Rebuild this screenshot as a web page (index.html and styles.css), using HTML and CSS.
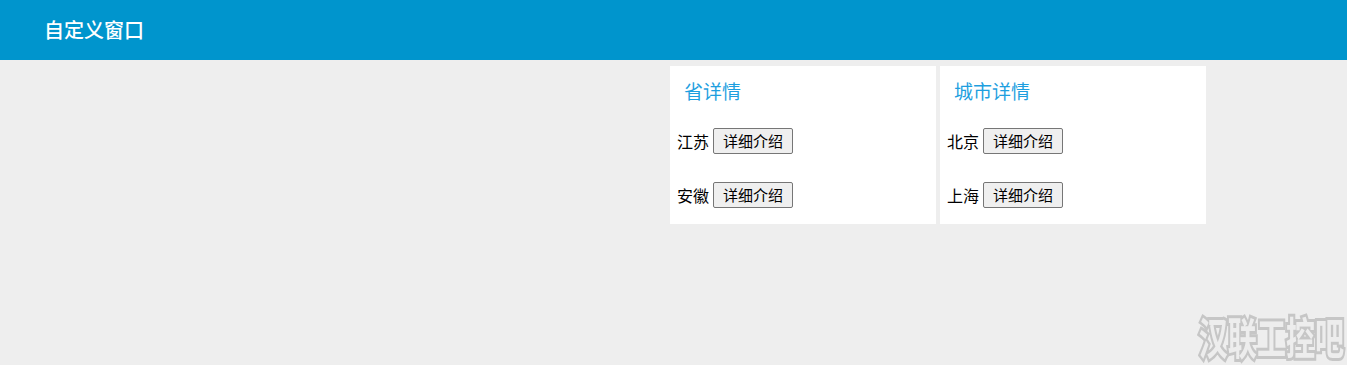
FILE: index.html
```html
<!DOCTYPE html>
<html lang="zh">
<head>
<meta charset="utf-8">
<title>自定义窗口</title>
<link rel="stylesheet" href="styles.css">
</head>
<body>
<header class="topbar">
  <div class="topbar-title">自定义窗口</div>
</header>
<main class="content">
  <section class="panel">
    <div class="panel-title">省详情</div>
    <div class="row"><span class="name">江苏</span><button class="btn">详细介绍</button></div>
    <div class="row"><span class="name">安徽</span><button class="btn">详细介绍</button></div>
  </section>
  <section class="panel">
    <div class="panel-title">城市详情</div>
    <div class="row"><span class="name">北京</span><button class="btn">详细介绍</button></div>
    <div class="row"><span class="name">上海</span><button class="btn">详细介绍</button></div>
  </section>
</main>
<div class="watermark">汉联工控吧</div>
</body>
</html>
```

FILE: styles.css
```css
html, body {
  margin: 0;
  padding: 0;
  height: 100%;
  background: #eeeeee;
  font-family: "Noto Sans CJK SC", "Noto Sans", sans-serif;
  overflow: hidden;
}
.topbar {
  height: 60px;
  background: #0095cd;
  display: flex;
  align-items: center;
  padding-left: 44px;
}
.topbar-title {
  color: #ffffff;
  font-size: 20px;
  font-weight: 500;
  line-height: 24px;
}
.content {
  display: flex;
  gap: 4px;
  padding: 6px 0 0 670px;
}
.panel {
  width: 266px;
  height: 158px;
  background: #ffffff;
  box-sizing: border-box;
  padding: 0 7px;
}
.panel-title {
  height: 48px;
  display: flex;
  align-items: center;
  padding-left: 7px;
  color: #1e9fdf;
  font-size: 19px;
}
.row {
  height: 54px;
  display: flex;
  align-items: center;
  font-size: 16px;
  color: #000;
}
.name {
  margin-right: 4px;
}
.btn {
  font-family: "Noto Sans CJK SC", sans-serif;
  font-size: 15px;
  line-height: 20px;
  padding: 1px 6px;
  background: #efefef;
  border: 1px solid #767676;
  border-radius: 2px;
  color: #000;
  width: 80px;
  height: 26px;
}
.watermark {
  position: fixed;
  right: 3px;
  bottom: 4px;
  font-size: 44px;
  font-weight: bold;
  line-height: 50px;
  color: #ededed;
  -webkit-text-stroke: 6px #c6c6c6;
  paint-order: stroke fill;
  transform: scaleX(0.66);
  transform-origin: right bottom;
}
```
